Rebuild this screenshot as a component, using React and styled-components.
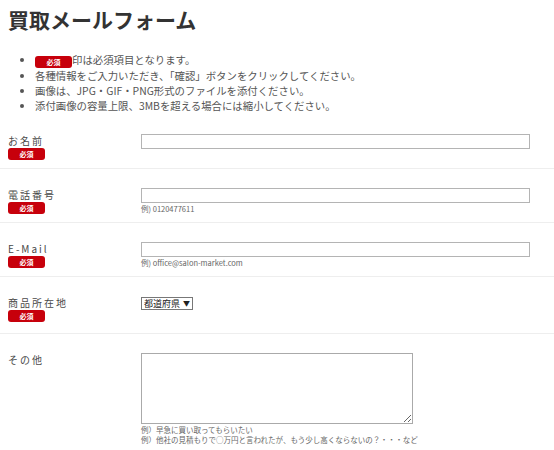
import React from 'react';
import styled, { createGlobalStyle } from 'styled-components';

const GlobalStyle = createGlobalStyle`
  body {
    margin: 0;
    background: #fff;
    font-family: "Noto Sans CJK JP", "Noto Sans", sans-serif;
    color: #444;
  }
`;

const notes = [
  { badge: true, text: '印は必須項目となります。' },
  { text: '各種情報をご入力いただき、「確認」ボタンをクリックしてください。' },
  { text: '画像は、JPG・GIF・PNG形式のファイルを添付ください。' },
  { text: '添付画像の容量上限、3MBを超える場合には縮小してください。' },
];

const App = () => {
  return (
    <Page>
      <GlobalStyle />
      <Title>買取メールフォーム</Title>
      <Notes>
        {notes.map((n, i) => (
          <li key={i}>
            {n.badge && <Badge inline>必須</Badge>}
            {n.text}
          </li>
        ))}
      </Notes>
      <Form>
        <Row>
          <LabelCell>
            <Label>お名前</Label>
            <Badge>必須</Badge>
          </LabelCell>
          <FieldCell>
            <TextInput type="text" />
          </FieldCell>
        </Row>
        <Row>
          <LabelCell>
            <Label>電話番号</Label>
            <Badge>必須</Badge>
          </LabelCell>
          <FieldCell>
            <TextInput type="text" />
            <Hint>例) 0120477611</Hint>
          </FieldCell>
        </Row>
        <Row>
          <LabelCell>
            <Label>E-Mail</Label>
            <Badge>必須</Badge>
          </LabelCell>
          <FieldCell>
            <TextInput type="text" />
            <Hint>例) office@salon-market.com</Hint>
          </FieldCell>
        </Row>
        <Row extra={3}>
          <LabelCell>
            <Label>商品所在地</Label>
            <Badge>必須</Badge>
          </LabelCell>
          <FieldCell>
            <SelectWrap>
              <Select defaultValue="">
                <option value="">都道府県</option>
              </Select>
              <Arrow>▼</Arrow>
            </SelectWrap>
          </FieldCell>
        </Row>
        <Row extra={-3}>
          <LabelCell>
            <Label>その他</Label>
          </LabelCell>
          <FieldCell>
            <TextArea />
            <Hint>例）早急に買い取ってもらいたい</Hint>
            <Hint>例）他社の見積もりで○万円と言われたが、もう少し高くならないの？・・・など</Hint>
          </FieldCell>
        </Row>
      </Form>
    </Page>
  );
};

const Page = styled.div`
  width: 554px;
`;

const Title = styled.h1`
  margin: 0;
  padding: 6px 8px 0;
  font-size: 21px;
  line-height: 26px;
  font-weight: bold;
  color: #333;
`;

const Notes = styled.ul`
  margin: 20px 0 0;
  padding-left: 35px;
  font-size: 10.4px;
  line-height: 15px;
  color: #555;
`;

const Badge = styled.span`
  display: ${props => (props.inline ? 'inline-block' : 'block')};
  width: 37px;
  height: 12px;
  margin-top: ${props => (props.inline ? '0' : '1px')};
  vertical-align: ${props => (props.inline ? '-1px' : 'baseline')};
  background: #c7000b;
  border-radius: 3px;
  color: #fff;
  font-size: 7px;
  font-weight: bold;
  line-height: 12px;
  text-align: center;
`;

const Form = styled.div`
  margin-top: 2px;
`;

const Row = styled.div`
  display: grid;
  grid-template-columns: 133px 1fr;
  padding: 19px 0 ${props => 8 + (props.extra || 0)}px 8px;
  border-bottom: 1px solid #eee;
`;

const LabelCell = styled.div`
  display: flex;
  flex-direction: column;
`;

const Label = styled.div`
  font-size: 10px;
  line-height: 13px;
  letter-spacing: 2px;
  color: #4a4a4a;
`;

const FieldCell = styled.div`
  display: flex;
  flex-direction: column;
  align-items: flex-start;
`;

const TextInput = styled.input`
  box-sizing: border-box;
  width: 389px;
  height: 15px;
  margin: 0;
  padding: 0 3px;
  border: 1px solid #b4b4b4;
  font-size: 10px;
  background: #fff;
`;

const Hint = styled.div`
  font-size: 7.5px;
  line-height: 10px;
  margin-top: 1px;
  color: #666;
  white-space: nowrap;
  & + & {
    margin-top: 0;
  }
`;

const SelectWrap = styled.span`
  position: relative;
  display: inline-flex;
  margin-top: 1px;
`;

const Select = styled.select`
  appearance: none;
  box-sizing: border-box;
  width: 52px;
  height: 13px;
  margin: 0;
  padding: 0 0 0 2px;
  border: 1px solid #777;
  border-radius: 0;
  background: #fff;
  font-family: "Noto Sans CJK JP", sans-serif;
  font-size: 9px;
  line-height: 11px;
  color: #222;
`;

const Arrow = styled.span`
  position: absolute;
  right: 3px;
  top: 1px;
  font-size: 7px;
  line-height: 11px;
  color: #222;
  pointer-events: none;
`;

const TextArea = styled.textarea`
  box-sizing: border-box;
  width: 272px;
  height: 71px;
  margin: 0;
  border: 1px solid #aaa;
  resize: both;
`;

export default App;
